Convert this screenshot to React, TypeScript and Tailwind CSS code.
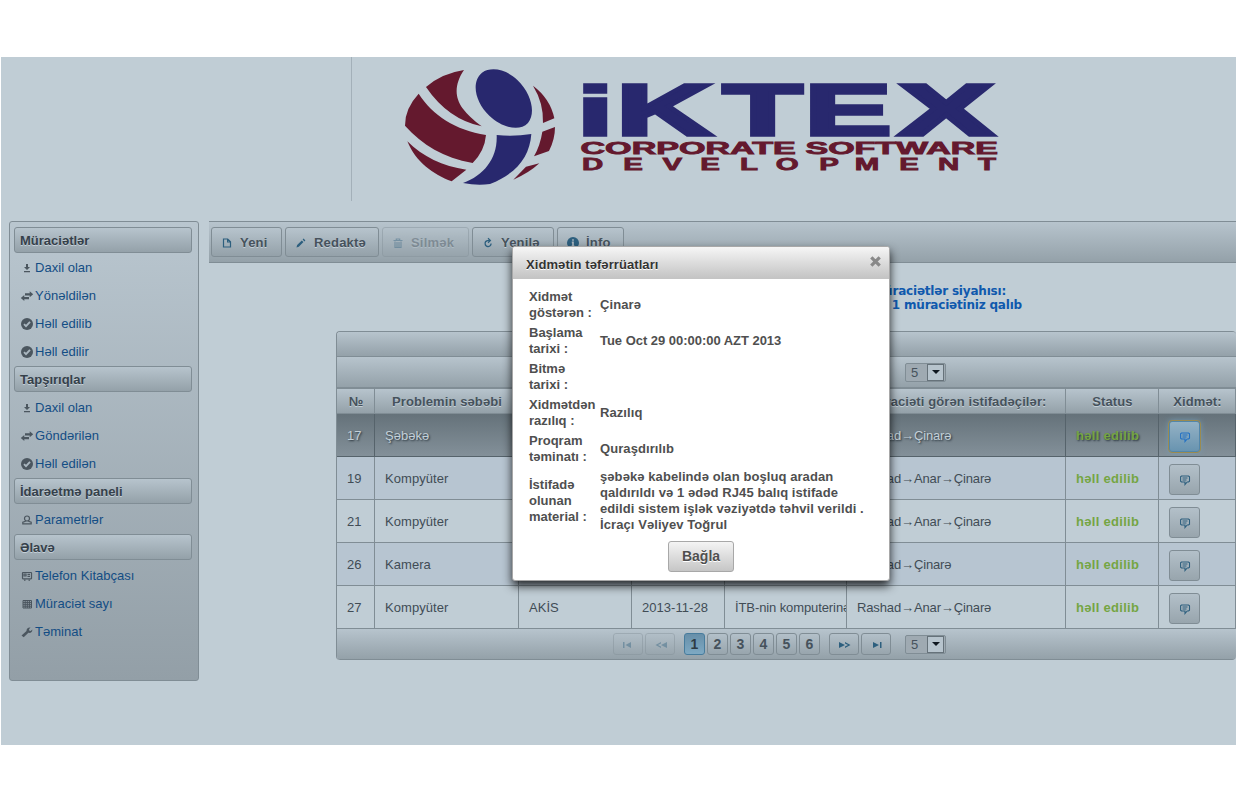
import React from "react";

const LogoGlyph = ({ c, x, s, size = 72.5 }: { c: string; x: number; s: number; size?: number }) => (
  <text transform={`translate(${x} 135) scale(${s} 1)`} fontSize={size} strokeWidth="3.5">{c}</text>
);

const developmentLetters: [string, number][] = [
  ["D", 592.5], ["E", 633], ["V", 672.3], ["E", 710], ["L", 749], ["O", 787.3],
  ["P", 829], ["M", 867], ["E", 909], ["N", 948.5], ["T", 987],
];

const Logo = () => (
  <svg width="640" height="140" viewBox="390 57 640 140" fontFamily="Liberation Sans, Arial, sans-serif" fontWeight="700">
    <g transform="translate(390 57) scale(.33333)" fill="#64192e">
      <path d="M108 90Q155 49 222 39C191 85 196 122 217 153Q238 181 275 208Q174 187 108 90Z" />
      <path d="M86 110C128 175 196 219 288 234Q284 282 248 318C160 302 98 264 45 206Q44 155 86 110Z" />
      <path d="M52 253C98 299 158 328 229 338L185 373C129 352 78 316 52 253Z" />
      <path d="M429 86Q481 125 493 184L459 198Q461 138 429 86Z" />
      <path d="M457 224L495 210Q495 247 477 282L432 298Q451 264 457 224Z" />
      <path d="M370 368L408 329L448 319Q417 348 370 368Z" />
      <path fill="#28286e" d="M320 234Q370 240 424 231C419 300 379 350 300 381Q260 386 219 378C283 354 323 303 320 234Z" />
      <path fill="#28286e" d="M276 47C305 27 350 38 382 69C425 110 438 169 414 198C387 226 333 210 298 176C256 136 242 76 276 47Z" />
    </g>
    <g fill="#28286e" stroke="#28286e" strokeMiterlimit="8">
      <LogoGlyph c="i" x={577.6} s={1.86} size={68.8} />
      <LogoGlyph c="K" x={616.2} s={1.83} />
      <LogoGlyph c="T" x={722.7} s={1.8} />
      <LogoGlyph c="E" x={804.4} s={1.8} />
      <LogoGlyph c="X" x={898.5} s={1.97} />
    </g>
    <g fill="#64192e" stroke="#64192e" strokeWidth=".8">
      <text transform="translate(580.5 153.8) scale(1.75 1)" fontSize="16.4" textLength="123" lengthAdjust="spacingAndGlyphs">CORPORATE</text>
      <text transform="translate(805.5 153.8) scale(1.75 1)" fontSize="16.4" textLength="110" lengthAdjust="spacingAndGlyphs">SOFTWARE</text>
      {developmentLetters.map(([c, x]) => (
        <text key={x} transform={`translate(${x} 170.1) scale(1.75 1)`} fontSize="16.8" textAnchor="middle">{c}</text>
      ))}
    </g>
  </svg>
);

type IconName = "down" | "swap" | "check" | "user" | "card" | "grid" | "wrench" | "file" | "pencil" | "trash" | "refresh" | "info" | "chat";

const Icon = ({ name, className = "" }: { name: IconName; className?: string }) => (
  <svg className={`shrink-0 ${className}`} width="14" height="14" viewBox="0 0 14 14" fill="none" stroke="currentColor" strokeWidth="1.2">
    {name === "down" && <path fill="currentColor" stroke="none" d="M6 3h2v3h2L7 9 4 6h2zM4 10h6v1.2H4z" />}
    {name === "swap" && <path fill="currentColor" stroke="none" d="M5 4.2h4.700V2.300L13.200 5.300l-3.500 3V6.400H5zM9 10.200H4.300v1.900L.8 9.100l3.500-3V8H9z" />}
    {name === "check" && <><circle cx="7" cy="7" r="6" fill="currentColor" stroke="none" /><path stroke="#aab7c0" strokeWidth="1.9" d="M4 7.200l2 2 4-4.300" /></>}
    {name === "user" && <><circle cx="7" cy="5.5" r="2.5" /><path d="M5.700 8.200L2.800 9.200v1.600h8.400V9.200L8.300 8.200" /></>}
    {name === "card" && <><rect x="2.500" y="3.500" width="9" height="6.300" rx=".5" /><path d="M4 5h2v2H4zM7.500 5.300H10M7.500 7.300H10M4 11.200h1.500M8.500 11.200H10" /></>}
    {name === "grid" && <path strokeWidth="1" d="M3 3.500h8.500v7.500H3zM5.200 3.500V11M7.300 3.500V11M9.400 3.500V11M3 5.400h8.500M3 7.300h8.500M3 9.200h8.500" />}
    {name === "wrench" && <path fill="currentColor" stroke="none" d="M1.500 10.500L6.500 6C6.200 3.800 8.200 2.100 10.500 2.500L9 4.200l.4 1.500 1.300.2 1.600-1.400c.3 2.500-1.700 3.900-3.900 3.300L3.700 12.200z" />}
    {name === "file" && <path d="M3.500 3h4.200l2.800 2.800V11h-7zM7.600 3v3h3" />}
    {name === "pencil" && <path fill="currentColor" stroke="none" d="M2.500 11.500l.6-2.400L7.800 4.400l1.700 1.700-4.700 4.700zM8.600 3.600l1-1 1.800 1.800-1 1z" />}
    {name === "trash" && <path d="M2.500 4.500h9M5.300 4.200V3h3.400v1.200M4 5.500v6h6v-6M6 6v5M8 6v5" />}
    {name === "refresh" && <path d="M8.500 4.600H6.500a3 3 0 1 0 3.600 3M7 2.300L9.400 4.600 7 6.700" />}
    {name === "info" && <><circle cx="7" cy="7" r="6" fill="currentColor" stroke="none" /><path stroke="#a8b5bf" strokeWidth="1.700" d="M7 3.200v1.600M5.800 6.400H7v4M5.500 10.300h3" /></>}
    {name === "chat" && <path strokeWidth="1.1" d="M3.500 3h7l1 .8v4.400l-1 .8H9.200L7 11.500V9H3.500l-.9-.8V3.800zM4.500 5h5M4.500 7h4" />}
  </svg>
);

const SideHead = ({ children }: { children: React.ReactNode }) => (
  <div className="flex h-[26px] items-center rounded-[3px] border border-[#808d95] bg-linear-to-b from-[#b7c4cd] to-[#94a1a9] pl-[5px] pt-[2px] text-[13px] font-bold text-[#35404a] [text-shadow:0_1px_0_#c4d0d8]">{children}</div>
);

const SideItem = ({ icon, children }: { icon: IconName; children: React.ReactNode }) => (
  <div className="flex h-[28px] items-center pl-[6px] pt-[2px] text-[13px] tracking-[0.03px] text-[#134d84]">
    <Icon name={icon} className="text-[#4b565f]" />
    <span className="ml-px">{children}</span>
  </div>
);

const ToolButton = ({ icon, children, className, disabled = false }: { icon: IconName; children: React.ReactNode; className: string; disabled?: boolean }) => (
  <div className={`flex h-[30px] items-center rounded-[3px] border border-[#808d95] bg-linear-to-b from-[#b7c4cd] to-[#94a1a9] pl-[8px] pt-[2px] text-[13px] font-bold tracking-[0.2px] text-[#46525c] [text-shadow:0_1px_0_#c4d0d8] ${disabled ? "opacity-40" : ""} ${className}`}>
    <Icon name={icon} className="mr-[6px] text-[#2d5f7e]" />
    {children}
  </div>
);

const SizeSelect = () => (
  <div className="flex h-[19px] w-[41px] items-center justify-between rounded-[2px] border border-[#808d95] bg-[#9faab2] pl-[5px] text-[13px] text-[#46525c]">
    <span className="pt-px">5</span>
    <span className="mr-px flex h-[17px] w-[17px] items-center justify-center border border-[#66727a] bg-[#b7c4cd]">
      <span className="h-0 w-0 border-x-4 border-t-4 border-x-transparent border-t-[#101820]" />
    </span>
  </div>
);

const PagerArrow = ({ d, disabled = false, className = "" }: { d: string; disabled?: boolean; className?: string }) => (
  <div className={`flex h-[22px] w-[30px] items-center justify-center rounded-[3px] border border-[#808d95] bg-linear-to-b from-[#b3c0c9] to-[#98a5ad] text-[#2d5f7e] ${disabled ? "opacity-40" : ""} ${className}`}>
    <svg className="relative top-px left-px" width="14" height="8" viewBox="0 0 14 8" fill="currentColor"><path d={d} /></svg>
  </div>
);

const pages = [1, 2, 3, 4, 5, 6];

const columns = "grid grid-cols-[38px_144px_113px_93px_122px_219px_93px_77px]";

const rows = [
  { no: 17, cause: "Şəbəkə", users: "Rashad→Çinarə" },
  { no: 19, cause: "Kompyüter", users: "Rashad→Anar→Çinarə" },
  { no: 21, cause: "Kompyüter", users: "Rashad→Anar→Çinarə" },
  { no: 26, cause: "Kamera", users: "Rashad→Çinarə" },
  { no: 27, cause: "Kompyüter", system: "AKİS", date: "2013-11-28", detail: "İTB-nin komputerinə", users: "Rashad→Anar→Çinarə" },
];

const headings = ["№", "Problemin səbəbi", "", "", "", "Müraciəti görən istifadəçilər:", "Status", "Xidmət:"];

const TableRow = ({ row, index }: { row: (typeof rows)[number]; index: number }) => {
  const selected = index === 0;
  const tone = selected
    ? "bg-linear-to-b from-[#65727a] to-[#84919a] text-[#c3d0d8] [text-shadow:1px_1px_2px_#26313a]"
    : index % 2 ? "bg-[#b7c5d1] text-[#414c55]" : "bg-[#c0cdd5] text-[#414c55]";
  const cell = `flex items-center overflow-hidden whitespace-nowrap border-r border-b pl-[10px] pt-[2px] ${selected ? "border-[#56636b]" : "border-[#808d95]"}`;
  return (
    <div className={`${columns} h-[43px] text-[13px] tracking-[0.05px] ${tone}`}>
      <div className={cell}>{row.no}</div>
      <div className={cell}>{row.cause}</div>
      <div className={cell}>{row.system}</div>
      <div className={cell}>{row.date}</div>
      <div className={`${cell} tracking-[-0.1px]`}>{row.detail}</div>
      <div className={`${cell} tracking-[-0.13px]`}>{row.users}</div>
      <div className={`${cell} font-bold tracking-[0.3px] text-[#75a543]`}>{"həll edilib"}</div>
      <div className={cell}>
        <span className={`flex h-[31px] w-[31px] items-center justify-center rounded-[3px] border ${selected ? "border-[#5287ab] bg-linear-to-b from-[#94b2c5] to-[#6994b0] text-[#2371c4] outline outline-[#9b8b50] shadow-[0_0_6px_#72a0bd]" : "border-[#808d95] bg-linear-to-b from-[#b3c0c9] to-[#98a5ad] text-[#2d5f7e]"}`}>
          <Icon name="chat" className="relative top-px" />
        </span>
      </div>
    </div>
  );
};

const details: [string[], string[]][] = [
  [["Xidmət", "göstərən :"], ["Çinarə"]],
  [["Başlama", "tarixi :"], ["Tue Oct 29 00:00:00 AZT 2013"]],
  [["Bitmə", "tarixi :"], []],
  [["Xidmətdən", "razılıq :"], ["Razılıq"]],
  [["Proqram", "təminatı :"], ["Quraşdırılıb"]],
  [["İstifadə", "olunan", "material :"], ["şəbəkə kabelində olan boşluq aradan", "qaldırıldı və 1 ədəd RJ45 balıq istifade", "edildi sistem işlək vəziyətdə təhvil verildi .", "İcraçı Vəliyev Toğrul"]],
];

const Dialog = () => (
  <div className="absolute left-[512px] top-[246px] h-[335px] w-[378px] rounded-[3px] border border-[#a8a8a8] bg-white font-bold text-[#4f4f4f] shadow-[0_5px_10px_rgba(0,0,0,0.8)]">
    <div className="flex h-[32px] items-center justify-between rounded-t-[2px] border-b border-[#c4c4c4] bg-linear-to-b from-[#f6f6f6] to-[#c4c4c4] pl-[13px] pr-[8px] pt-[5px] text-[13px] tracking-[0.08px] text-[#333] [text-shadow:0_1px_0_#fff]">
      Xidmətin təfərrüatları
      <svg className="-mt-[8px]" width="11" height="11" viewBox="0 0 11 11" stroke="#898989" strokeWidth="3.2"><path d="M1.300 1.300l8.400 8.400M9.700 1.300L1.300 9.700" /></svg>
    </div>
    <div className="mt-[8px] pl-4 text-[13px] leading-4">
      {details.map(([label, value], i) => (
        <div key={i} className="flex items-center whitespace-nowrap py-[2px]">
          <div className="w-[71px]">{label.map((line) => <div key={line}>{line}</div>)}</div>
          <div className={i === 1 ? "tracking-[-0.03px]" : "tracking-[0.08px]"}>{value.map((line) => <div key={line}>{line}</div>)}</div>
        </div>
      ))}
    </div>
    <div className="mx-auto mt-[6px] flex h-[31px] w-[66px] items-center justify-center rounded-[3px] border border-[#a8a8a8] bg-linear-to-b from-[#f4f4f4] to-[#c6c6c6] text-[14px] [text-shadow:0_1px_0_#fff]">Bağla</div>
  </div>
);

export default function App() {
  return (
    <div className="relative h-[791px] w-[1236px] overflow-hidden bg-white pl-px pt-[57px] font-['Liberation_Sans',Arial,sans-serif]">
      <div className="h-[688px] w-[1235px] bg-[#c0cdd5]">
        <header className="flex h-[144px]">
          <div className="w-[351px] border-r border-[#a3b0b9]" />
          <div className="pl-[38px]"><Logo /></div>
        </header>
        <div className="flex pt-5">
          <aside className="ml-2 h-[460px] w-[190px] shrink-0 rounded-[3px] border border-[#808d95] bg-linear-to-b from-[#b9c6cf] to-[#939fa7] px-[4px] pt-[5px] pr-[6px]">
            <SideHead>Müraciətlər</SideHead>
            <SideItem icon="down">Daxil olan</SideItem>
            <SideItem icon="swap">Yönəldilən</SideItem>
            <SideItem icon="check">Həll edilib</SideItem>
            <SideItem icon="check">Həll edilir</SideItem>
            <div className="h-px" />
            <SideHead>Tapşırıqlar</SideHead>
            <div className="h-px" />
            <SideItem icon="down">Daxil olan</SideItem>
            <SideItem icon="swap">Göndərilən</SideItem>
            <SideItem icon="check">Həll edilən</SideItem>
            <div className="h-px" />
            <SideHead>İdarəetmə paneli</SideHead>
            <div className="h-px" />
            <SideItem icon="user">Parametrlər</SideItem>
            <div className="h-px" />
            <SideHead>Əlavə</SideHead>
            <div className="h-px" />
            <SideItem icon="card">Telefon Kitabçası</SideItem>
            <SideItem icon="grid">Müraciət sayı</SideItem>
            <SideItem icon="wrench">Təminat</SideItem>
          </aside>
          <main className="ml-[10px] w-[1027px]">
            <div className="flex h-[42px] items-center gap-[3px] border-y border-[#808d95] bg-linear-to-b from-[#b7c4cd] to-[#94a1a9] pl-[2px]">
              <ToolButton icon="file" className="w-[71px]">Yeni</ToolButton>
              <ToolButton icon="pencil" className="w-[94px]">Redaktə</ToolButton>
              <ToolButton icon="trash" className="w-[87px]" disabled>Silmək</ToolButton>
              <ToolButton icon="refresh" className="w-[82px]">Yenilə</ToolButton>
              <ToolButton icon="info" className="w-[67px]">İnfo</ToolButton>
            </div>
            <div className="flex h-[68px] flex-col items-end pt-[21px] font-['DejaVu_Sans',Verdana,sans-serif] text-[12px] font-bold leading-[14px] tracking-[-0.2px] text-[#0f59ad]">
              <div className="mr-[230px]">Müraciətlər siyahısı:</div>
              <div className="mr-[214px]">1 müraciətiniz qalıb</div>
            </div>
            <section className="ml-[127px] w-[900px] overflow-hidden rounded-[4px] border-l border-t border-[#808d95]">
              <div className="h-[25px] border-b border-[#808d95] bg-linear-to-b from-[#b7c4cd] to-[#94a1a9]" />
              <div className="flex h-[32px] items-center border-b-2 border-[#808d95] bg-linear-to-b from-[#b7c4cd] to-[#94a1a9] pl-[568px]"><SizeSelect /></div>
              <div className={`${columns} h-[25px] border-b border-[#808d95] bg-linear-to-b from-[#b7c4cd] to-[#94a1a9] text-[13px] font-bold tracking-[0.1px] text-[#46525c] [text-shadow:0_1px_0_#c4d0d8]`}>
                {headings.map((h, i) => <div key={i} className="flex items-center justify-center whitespace-nowrap border-r border-[#808d95] pl-px pt-[2px]">{h}</div>)}
              </div>
              {rows.map((row, i) => <TableRow key={row.no} row={row} index={i} />)}
              <div className="flex h-[31px] items-center rounded-b-[3px] border-b border-[#808d95] bg-linear-to-b from-[#b7c4cd] to-[#94a1a9] pl-[276px]">
                <PagerArrow disabled d="M1 1h1.500v6H1zM9 1v6L3.500 4z" />
                <PagerArrow disabled className="ml-[2px]" d="M13 1v6L7 4zM7 1v1.400L4 4l3 1.600V7L1.500 4z" />
                <div className="ml-[9px] flex gap-[2px]">
                  {pages.map((p) => (
                    <div key={p} className={`flex h-[22px] w-[21px] items-center justify-center rounded-[3px] border pt-px text-[14px] font-bold ${p === 1 ? "border-[#477c9d] bg-linear-to-b from-[#678fa9] to-[#7ea9c3] text-[#2f3b44]" : "border-[#808d95] bg-linear-to-b from-[#b3c0c9] to-[#98a5ad] text-[#46525c]"}`}>{p}</div>
                  ))}
                </div>
                <PagerArrow className="ml-[9px]" d="M1 1v6l6-3zM7 1v1.400L10 4 7 5.600V7l5.500-3z" />
                <PagerArrow className="ml-[2px]" d="M3 1v6l6-3zM10 1h1.500v6H10z" />
                <div className="ml-[14px]"><SizeSelect /></div>
              </div>
            </section>
          </main>
        </div>
      </div>
      <Dialog />
    </div>
  );
}
